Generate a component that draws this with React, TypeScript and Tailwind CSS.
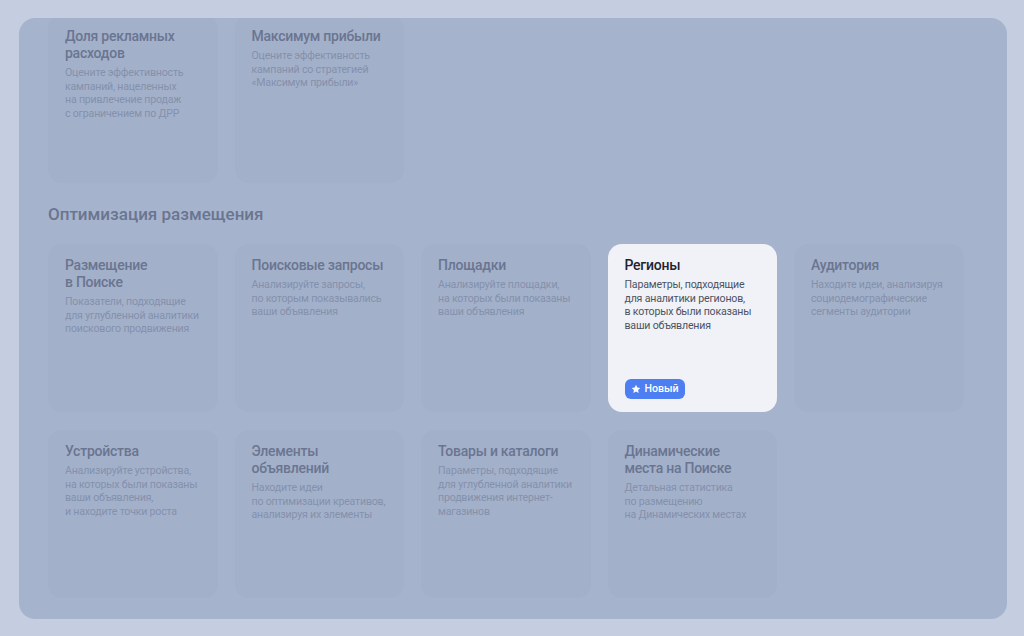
import React from 'react';

type Report = {
  title: string[];
  text: string[];
  isNew?: boolean;
};

const strategies: Report[] = [
  {
    title: ['Доля рекламных', 'расходов'],
    text: ['Оцените эффективность', 'кампаний, нацеленных', 'на привлечение продаж', 'с ограничением по ДРР'],
  },
  {
    title: ['Максимум прибыли'],
    text: ['Оцените эффективность', 'кампаний со стратегией', '«Максимум прибыли»'],
  },
];

const placement: Report[] = [
  {
    title: ['Размещение', 'в Поиске'],
    text: ['Показатели, подходящие', 'для углубленной аналитики', 'поискового продвижения'],
  },
  {
    title: ['Поисковые запросы'],
    text: ['Анализируйте запросы,', 'по которым показывались', 'ваши объявления'],
  },
  {
    title: ['Площадки'],
    text: ['Анализируйте площадки,', 'на которых были показаны', 'ваши объявления'],
  },
  {
    title: ['Регионы'],
    text: ['Параметры, подходящие', 'для аналитики регионов,', 'в которых были показаны', 'ваши объявления'],
    isNew: true,
  },
  {
    title: ['Аудитория'],
    text: ['Находите идеи, анализируя', 'социодемографические', 'сегменты аудитории'],
  },
  {
    title: ['Устройства'],
    text: ['Анализируйте устройства,', 'на которых были показаны', 'ваши объявления,', 'и находите точки роста'],
  },
  {
    title: ['Элементы', 'объявлений'],
    text: ['Находите идеи', 'по оптимизации креативов,', 'анализируя их элементы'],
  },
  {
    title: ['Товары и каталоги'],
    text: ['Параметры, подходящие', 'для углубленной аналитики', 'продвижения интернет-', 'магазинов'],
  },
  {
    title: ['Динамические', 'места на Поиске'],
    text: ['Детальная статистика', 'по размещению', 'на Динамических местах'],
  },
];

function Star() {
  return (
    <svg width="10" height="10" viewBox="0 0 24 24" fill="currentColor">
      <path d="M12 1.8l3.1 6.6 7.2.9-5.3 5 1.4 7.1L12 17.9l-6.4 3.5 1.4-7.1-5.3-5 7.2-.9z" />
    </svg>
  );
}

function Card({ report }: { report: Report }) {
  const active = report.isNew;
  return (
    <div
      className={
        active
          ? 'flex h-[168px] flex-col rounded-[14px] bg-[#f0f2f7] px-[17px] pt-[13px] pb-[13px]'
          : 'flex h-[168px] flex-col rounded-[14px] bg-[#a3b0ca] px-[17px] pt-[13px] pb-[13px]'
      }
    >
      <div
        className={
          active
            ? 'text-[14px] leading-[17px] font-medium tracking-[-0.25px] text-[#1f2230]'
            : 'text-[14px] leading-[17px] font-medium tracking-[-0.25px] text-[#6a7590]'
        }
      >
        {report.title.map((line) => (
          <div key={line} className="whitespace-nowrap">
            {line}
          </div>
        ))}
      </div>
      <div
        className={
          active
            ? 'mt-[4px] text-[10.6px] leading-[13.7px] tracking-[-0.2px] text-[#4d5263]'
            : 'mt-[4px] text-[10.6px] leading-[13.7px] tracking-[-0.2px] text-[#8491ab]'
        }
      >
        {report.text.map((line) => (
          <div key={line} className="whitespace-nowrap">
            {line}
          </div>
        ))}
      </div>
      {active && (
        <div className="mt-auto flex h-[20px] w-fit items-center gap-[4px] rounded-[6px] bg-[#4d7ff2] pr-[6px] pl-[6px] text-[10.6px] font-medium text-white">
          <Star />
          Новый
        </div>
      )}
    </div>
  );
}

export default function App() {
  return (
    <div
      className="h-[636px] w-full bg-[#c5cde0] pt-[18px] pr-[17px] pb-[17px] pl-[19px]"
      style={{ fontFamily: 'Roboto, "Noto Sans", sans-serif' }}
    >
      <div className="h-[601px] overflow-hidden rounded-[16px] bg-[#a6b3cd]">
        <div className="-mt-[3px] px-[29px]">
          <div className="grid grid-cols-[repeat(5,169.5px)] gap-x-[17px]">
            {strategies.map((r) => (
              <Card key={r.title.join(' ')} report={r} />
            ))}
          </div>

          <h2 className="mt-[20px] mb-[19px] text-[17px] leading-[22px] font-medium text-[#6a7590]">
            Оптимизация размещения
          </h2>

          <div className="grid grid-cols-[repeat(5,169.5px)] gap-x-[17px] gap-y-[18px]">
            {placement.map((r) => (
              <Card key={r.title.join(' ')} report={r} />
            ))}
          </div>
        </div>
      </div>
    </div>
  );
}
